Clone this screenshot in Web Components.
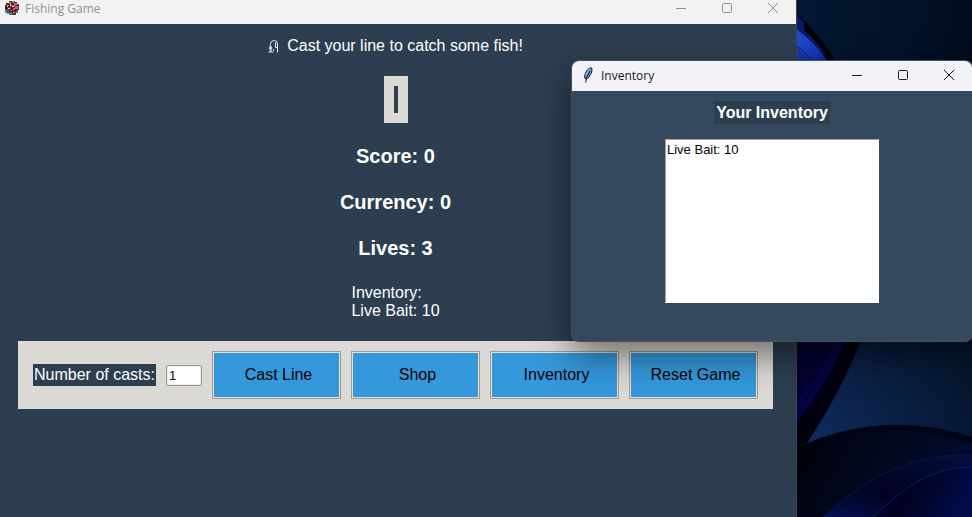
<!DOCTYPE html>
<html lang="en">
<head>
<meta charset="utf-8">
<title>Fishing Game</title>
<style>
  body { margin: 0; font-family: "Liberation Sans", Arial, sans-serif; }
</style>
</head>
<body>
<desk-top></desk-top>

<script>
const define = (name, html, setup) => {
  const template = document.createElement('template');
  template.innerHTML = html;
  customElements.define(name, class extends HTMLElement {
    constructor() {
      super();
      this.attachShadow({ mode: 'open' }).append(template.content.cloneNode(true));
    }
    connectedCallback() { if (setup) setup(this, this.shadowRoot); }
  });
};

define('desktop-wallpaper', `
  <style>
    :host { display: block; background: #04122a; }
    svg { display: block; width: 100%; height: 100%; }
  </style>
  <svg viewBox="0 0 176 517" preserveAspectRatio="xMinYMin slice" aria-hidden="true">
    <defs>
      <linearGradient id="sky" x1="0" y1="0" x2="1" y2="0"><stop offset="0" stop-color="#041630"/><stop offset=".6" stop-color="#03122a"/><stop offset="1" stop-color="#020c1d"/></linearGradient>
      <radialGradient id="glow" gradientUnits="userSpaceOnUse" cx="20" cy="440" r="190"><stop offset="0" stop-color="#0f2a5c"/><stop offset=".45" stop-color="#0a2042"/><stop offset="1" stop-color="#041227"/></radialGradient>
      <linearGradient id="petal" x1="0" y1="0" x2="1" y2="1"><stop offset="0" stop-color="#2450d8"/><stop offset=".6" stop-color="#1738b4"/><stop offset="1" stop-color="#0a1d78"/></linearGradient>
      <linearGradient id="petal2" x1="0" y1="0" x2="1" y2="1"><stop offset="0" stop-color="#1b3cae"/><stop offset="1" stop-color="#122d9c"/></linearGradient>
      <linearGradient id="fold" x1="0" y1="0" x2="1" y2="1"><stop offset="0" stop-color="#02023c"/><stop offset=".55" stop-color="#030440"/><stop offset="1" stop-color="#000016"/></linearGradient>
      <linearGradient id="low" x1="0" y1="0" x2="1" y2=".3"><stop offset="0" stop-color="#000006"/><stop offset=".5" stop-color="#01071c"/><stop offset="1" stop-color="#020b2c"/></linearGradient>
      <linearGradient id="rib" x1="0" y1="1" x2="1" y2="0"><stop offset="0" stop-color="#05104e"/><stop offset=".4" stop-color="#01021f"/><stop offset="1" stop-color="#030e40"/></linearGradient>
      <linearGradient id="rib2" x1="0" y1="0" x2="1" y2=".3"><stop offset="0" stop-color="#030b45"/><stop offset=".45" stop-color="#01011e"/><stop offset="1" stop-color="#020b45"/></linearGradient>
    </defs>
    <rect width="176" height="300" fill="url(#sky)"/>
    <rect y="300" width="176" height="217" fill="url(#glow)"/>
    <path d="M0 13Q23 33 43 66H0Z" fill="#000014"/>
    <path d="M0 14Q16 29 33 58L0 34Z" fill="#0a1a66"/>
    <path d="M8 21Q25 36 42 66H37Q22 42 8 30Z" fill="#000010"/>
    <path d="M0 29Q19 42 35 66H0Z" fill="url(#petal)"/>
    <path d="M0 46Q12 52 20 66H0Z" fill="url(#petal2)"/>
    <path d="M0 46Q12 52 20 66" fill="none" stroke="#0b217f"/>
    <path d="M0 330H69Q47 389 11 443L0 448Z" fill="#00000f"/>
    <path d="M0 330H54Q38 374 0 424Z" fill="url(#fold)"/>
    <path d="M0 330H44Q30 366 0 401Z" fill="#02022f"/>
    <path d="M43 342Q26 376 0 404" fill="none" stroke="#070a45"/>
    <path d="M0 448Q87 408 176 437V517H0Z" fill="url(#low)"/>
    <path d="M11 444Q87 410 176 437V443Q88 417 11 444Z" fill="#000615"/>
    <path d="M27 517Q95 452 176 455V517Z" fill="url(#rib)"/>
    <path d="M27 517Q95 452 176 455" fill="none" stroke="#07144a"/>
    <path d="M78 517Q126 466 176 467V517Z" fill="url(#rib2)"/>
    <path d="M78 517Q126 466 176 467" fill="none" stroke="#0b1c5c"/>
  </svg>`);

define('window-controls', `
  <style>
    :host { display: flex; align-self: stretch; }
    button { width: 46px; padding: 0; border: 0; background: none; color: inherit; display: grid; place-items: center; }
    svg { display: block; width: 12px; height: 12px; fill: none; stroke: currentColor; }
  </style>
  <button aria-label="Minimize"><svg viewBox="0 0 12 12"><path d="M1 5.5H11"/></svg></button>
  <button aria-label="Maximize"><svg viewBox="0 0 12 12"><rect x="1.5" y=".5" width="9" height="9" rx="1"/></svg></button>
  <button aria-label="Close"><svg viewBox="0 0 12 12"><path d="M1 0L11 10M11 0L1 10"/></svg></button>`);

define('app-window', `
  <style>
    :host { display: flex; flex-direction: column; box-sizing: border-box; overflow: hidden; background: var(--body); }
    header { display: flex; align-items: center; height: 30px; flex: none; background: var(--bar); color: var(--ink); }
    ::slotted([slot=icon]) { width: 14px; height: 16px; margin: 0 6px 2px var(--icon-start); }
    h1 { flex: 1; margin: 0; font: 12px/16px "Open Sans", "Noto Sans", sans-serif; }
    main { flex: 1; display: flex; flex-direction: column; align-items: center; }
  </style>
  <header><slot name="icon"></slot><h1></h1><window-controls></window-controls></header>
  <main><slot></slot></main>`,
  (host, root) => { root.querySelector('h1').textContent = host.getAttribute('heading'); });

define('game-icon', `
  <style>:host { display: block; } svg { display: block; width: 14px; height: 16px; }</style>
  <svg viewBox="0 0 14 16" shape-rendering="crispEdges" aria-hidden="true">
    <path fill="#5a2a2e" d="M4 1h6v1h2v2h2v6h-1v3h-2v2H4v-1H2v-2H0V5h1V3h3z"/>
    <path fill="#8fa04c" d="M4 2h2v2H4zM7 1h2v2H7zM2 5h2v1H2zM6 5h2v1H6z"/>
    <path fill="#f0427c" d="M9 3h3v2H9zM10 6h3v3h-3zM8 8h2v2H8z"/>
    <path fill="#f6bfae" d="M5 4h1v2H5zM3 8h2v1H3zM7 6h2v1H7zM6 10h1v1H6zM9 5h1v1H9zM2 6h1v1H2zM8 12h1v1H8z"/>
    <path fill="#1e9fa3" d="M0 10h2v2h2v1h3v2H4v-1H2v-1H0zM11 11h2v1h-1v1h-2v-1h1z"/>
    <path fill="#c3282c" d="M2 9h2v2H2zM5 12h2v1H5zM9 12h1v1H9zM5 7h1v2H5z"/>
    <path fill="#120a10" d="M3 4h1v1H3zM6 3h2v1H6zM4 6h1v1H4zM1 7h1v2H1zM6 8h1v2H6zM8 4h1v1H8zM9 10h2v1H9zM7 11h1v2H7z"/>
  </svg>`);

define('feather-icon', `
  <style>:host { display: block; } svg { display: block; width: 14px; height: 16px; }</style>
  <svg viewBox="0 0 14 16" aria-hidden="true">
    <path d="M10.500.8C7.500 1 4.800 4.300 4 7.500c-.5 2-.4 3.300.4 4.500C7.500 11.500 8.700 9.500 9.200 7.600l.9-.9C11 4.500 11.200 2 10.500.8Z" fill="#5c9be0" stroke="#16181f"/>
    <path d="M9.300 2.300C7.300 3.500 5.800 5.600 5.100 8" fill="none" stroke="#c3dcf4"/>
    <path d="M9.200 3.500 6 9.500 4.600 15.500" fill="none" stroke="#16181f"/>
  </svg>`);

define('cast-message', `
  <style>
    :host { display: flex; align-items: center; gap: 7px; font-size: 16px; line-height: 18px; color: #fff; }
    svg { display: block; width: 12px; height: 16px; fill: none; stroke: #e9edf0; }
    p { margin: 0; }
  </style>
  <svg viewBox="0 0 12 16" aria-hidden="true">
    <path d="M2.500 7V5.500Q3 2.500 6.500 2.500Q9.500 2.500 9.500 6V14.500M7.500 4.500V9.500H9"/>
    <path d="M2.500 7.500Q5 9.500 2.800 12.500Q0 10.500 2.500 7.500ZM.5 14.500 2.800 12.500 5 14.500" fill="#b9c3cb" stroke-width=".8"/>
    <path d="M5.500 11V13.500" stroke-width=".8"/>
  </svg>
  <p><slot></slot></p>`);

define('catch-picture', `
  <style>
    :host { display: block; padding: 10px; background: #dcdad5; }
    div { width: 4px; height: 27px; background: #2c3e50; }
  </style>
  <div></div>`);

define('stat-label', `
  <style>:host { display: block; font-weight: bold; font-size: 20px; line-height: 24px; color: #fff; }</style>
  <slot></slot>`);

define('bag-summary', `
  <style>:host { display: block; font-size: 16px; line-height: 18px; color: #fff; } div { white-space: nowrap; }</style>
  <div>Inventory:</div><div>Live Bait: 10</div>`);

define('game-button', `
  <style>
    :host { display: block; }
    button { display: block; box-sizing: border-box; width: 129px; height: 48px; padding: 0 0 0 4px; font: 16px/18px "Liberation Sans", Arial, sans-serif;
      color: #000; background: #3498db; border: 1px solid #9e9a91; box-shadow: inset 0 0 0 1px #e4e1dc; }
  </style>
  <button type="button"><slot></slot></button>`);

define('cast-controls', `
  <style>
    :host { display: block; background: #dcdad5; }
    form { display: flex; flex-wrap: wrap; align-items: center; gap: 10px; padding: 10px 15px; }
    label { padding: 2px 1px; font-size: 16px; line-height: 18px; color: #fff; background: #2c3e50; white-space: nowrap; }
    input { box-sizing: border-box; width: 36px; height: 21px; padding: 0 2px; border: 1px solid #9e9a91; border-radius: 2px;
      box-shadow: inset 0 0 0 1px #eeebe7; background: #fff; color: #000; font: 13px/15px "Liberation Sans", Arial, sans-serif; }
  </style>
  <form>
    <label for="casts">Number of casts:</label>
    <input id="casts" type="text" inputmode="numeric" value="1">
    <game-button>Cast Line</game-button>
    <game-button>Shop</game-button>
    <game-button>Inventory</game-button>
    <game-button>Reset Game</game-button>
  </form>`);

define('inventory-list', `
  <style>
    :host { display: flex; flex-direction: column; align-items: center; gap: 15px; padding-top: 10px; }
    label { padding: 2px; font-weight: bold; font-size: 16px; line-height: 19px; color: #fff; background: #2c3e50; }
    select { appearance: none; box-sizing: border-box; width: 214px; height: 164px; margin: 0; padding: 2px 0; overflow: hidden; outline: 0;
      border: 1px solid #fff; border-top-color: #a0a0a0; border-left-color: #a0a0a0; border-radius: 0;
      background: #fff; color: #000; font: 13px/16px "Liberation Sans", Arial, sans-serif; }
    option { padding: 0 1px; min-height: 16px; line-height: 16px; }
  </style>
  <label for="items">Your Inventory</label>
  <select id="items" size="10"><option>Live Bait: 10</option></select>`);

define('desk-top', `
  <style>
    :host { display: block; position: relative; min-height: 100vh; overflow: hidden; }
    desktop-wallpaper { position: absolute; top: 0; right: 0; bottom: 0; width: 176px; }
    .game { position: absolute; top: -6px; left: 0; right: 175px; bottom: 0; border-right: 1px solid #3b4350;
      --bar: #f2f2f2; --ink: #929292; --body: #2c3e50; --icon-start: 5px; }
    .bag { position: absolute; top: 61px; right: 0; width: 400px; height: 280px; border-radius: 7px;
      box-shadow: 0 0 0 1px #46505c, 0 14px 36px rgba(0,0,0,.5);
      --bar: #f1f3f9; --ink: #1a1a1a; --body: #34495e; --icon-start: 9px; }
    .content { display: flex; flex-direction: column; align-items: center; gap: 22px; padding: 13px 5px 0 0; }
    catch-picture { margin: -1px 0; }
    bag-summary { margin: 2px 0 -1px; }
  </style>
  <desktop-wallpaper></desktop-wallpaper>
  <app-window class="game" heading="Fishing Game">
    <game-icon slot="icon"></game-icon>
    <div class="content">
      <cast-message>Cast your line to catch some fish!</cast-message>
      <catch-picture></catch-picture>
      <stat-label>Score: 0</stat-label>
      <stat-label>Currency: 0</stat-label>
      <stat-label>Lives: 3</stat-label>
      <bag-summary></bag-summary>
      <cast-controls></cast-controls>
    </div>
  </app-window>
  <app-window class="bag" heading="Inventory">
    <feather-icon slot="icon"></feather-icon>
    <inventory-list></inventory-list>
  </app-window>`);
</script>
</body>
</html>
